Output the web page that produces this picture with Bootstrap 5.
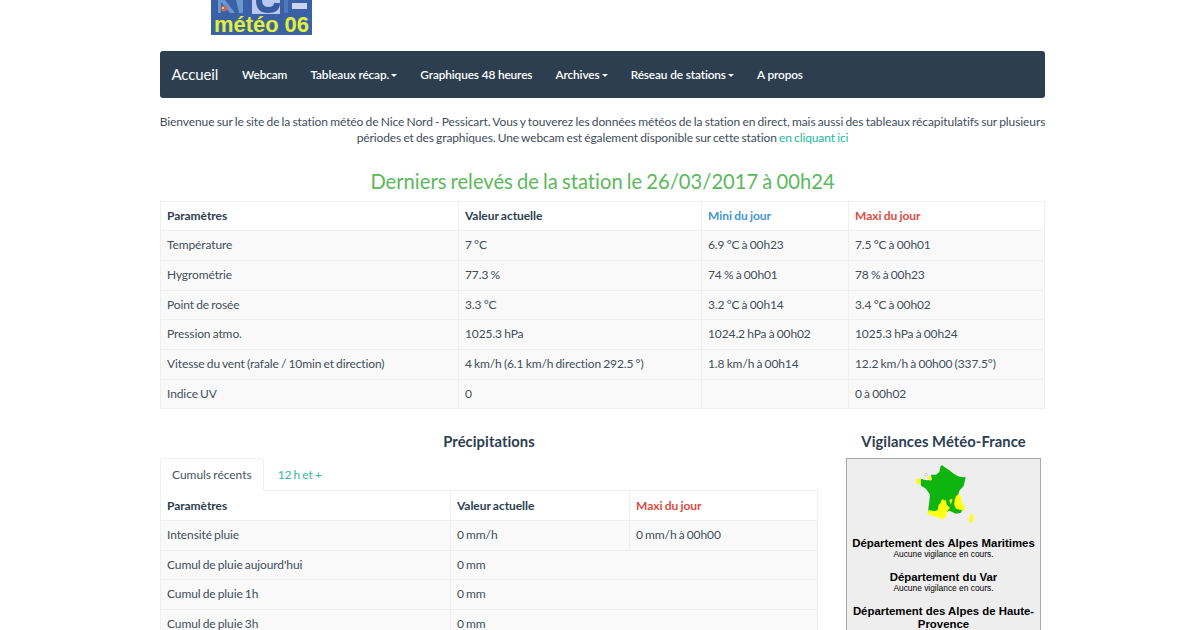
<!DOCTYPE html>
<html lang="fr">
<head>
<meta charset="utf-8">
<meta name="viewport" content="width=device-width, initial-scale=1">
<title>Nice Météo 06</title>
<link href="https://cdn.jsdelivr.net/npm/bootstrap@5.3.0/dist/css/bootstrap.min.css" rel="stylesheet">
<style>
body{font-family:Lato,"Liberation Sans",sans-serif;font-size:12px;letter-spacing:-.11px;word-spacing:-.75px;font-variant-ligatures:none;line-height:16.6px;color:#2c3e50}
a{color:#18bc9c;text-decoration:none}
.page{width:885px;height:630px;overflow:hidden;margin-left:160px}
.logo{display:block;width:101px;height:35px;margin-left:51px;letter-spacing:0;word-spacing:0}
.site-nav{height:47px;margin-top:16px;background:#2c3e50;border-radius:3px;padding:0 0 0 11.5px}
.site-nav .navbar-brand{font-size:15px;color:#fff;margin:0;padding:0;width:70.5px}
.site-nav .navbar-nav .nav-link{color:#fff;font-size:11.8px;font-weight:600;word-spacing:0;padding:1px 0 0;margin-right:23.2px;white-space:nowrap}
.site-nav .dropdown-toggle::after{border-top:3px solid;border-left:3px solid transparent;border-right:3px solid transparent;margin-left:2px;vertical-align:2px}
.intro{margin:16px -5px 0;line-height:16.2px;white-space:nowrap;color:#414e5b}
.intro-lead{letter-spacing:-.085px}
.title{font-size:20.2px;letter-spacing:0;word-spacing:-1.05px;line-height:22px;color:#5cb85c;margin:23.600px 0 8.700px;font-weight:400}
.sub{font-size:14.75px;letter-spacing:.08px;word-spacing:0;line-height:16px;font-weight:700;margin:0}
.data{table-layout:fixed;width:100%;margin:0;color:inherit;border-color:#ecf0f1;--bs-table-color:#2c3e50;--bs-table-border-color:#ecf0f1}
.data>:not(caption)>*>*{height:29.7px;padding:0 6px;vertical-align:middle;border-width:1px;color:inherit}
.data>tbody>tr>*{background:#f9f9f9;color:#414e5b}
.data>thead>tr>th{height:29.5px;letter-spacing:-.05px;word-spacing:-.6px}
.data>thead>tr>.mini{color:#3f97d3}
.data>thead>tr>.maxi{color:#dd4b40}
.lower{margin-top:24px;gap:28px}
.rain{width:658px}
.tabs{height:33px;margin-top:9px;border-bottom:1px solid #ecf0f1}
.tabs .nav-link{height:33px;padding:7.500px 11px;color:#35b899;border-color:transparent;border-radius:3px 3px 0 0;margin-right:2px}
.tabs .nav-link.active{color:#46545f;letter-spacing:-.03px;border-color:#ecf0f1 #ecf0f1 #fff}
.rain .data{margin-top:-1px}
.rain .data>thead>tr>th{padding-top:1px}
.alerts{width:195px}
.alert-box{margin-top:9px;height:220px;border:1px solid #a9a9a9;background:#eee;font-family:"Liberation Sans",sans-serif;letter-spacing:0;word-spacing:0;color:#000;padding:0 2px}
.alert-box svg{display:block;margin:0 auto;width:80px;height:78px}
.alert-box h3{font-size:11.4px;line-height:13px;font-weight:700;margin:0}
.alert-box p{font-size:8.4px;line-height:9px;margin:0 0 12px}
</style>
</head>
<body>
<div class="page">
<svg class="logo" viewBox="0 0 101 35" aria-label="Nice météo 06">
<rect width="101" height="35" fill="#3a61a6"/>
<rect x="41" width="28" height="14" fill="#b9c8ee"/>
<path d="M7 0h7l10 13h-5L10 2v11H7zM25 0h7v13h-4z" fill="#6a97cc"/>
<path d="M48 0q0 10 9 10t9-7" fill="none" stroke="#365a9e" stroke-width="6"/>
<path d="M81 3h15v6H81z" fill="#c9d4f2"/>
<path d="M73 0h4v13h-4z" fill="#5079ba"/>
<circle cx="13" cy="8.500" r="3" fill="#c9684c"/><circle cx="12" cy="8" r="1" fill="#f6dfa8"/>
<text x="50.500" y="31.500" text-anchor="middle" font-family="Liberation Sans, sans-serif" font-weight="700" font-size="21.5" textLength="95" lengthAdjust="spacingAndGlyphs" fill="#e3ef35">météo 06</text>
</svg>
<nav class="site-nav navbar navbar-expand d-flex justify-content-start">
<a class="navbar-brand" href="#">Accueil</a>
<ul class="navbar-nav">
<li><a class="nav-link" href="#">Webcam</a></li>
<li><a class="nav-link dropdown-toggle" href="#">Tableaux récap.</a></li>
<li><a class="nav-link" href="#">Graphiques 48 heures</a></li>
<li><a class="nav-link dropdown-toggle" href="#">Archives</a></li>
<li><a class="nav-link dropdown-toggle" href="#">Réseau de stations</a></li>
<li><a class="nav-link" href="#">A propos</a></li>
</ul>
</nav>
<p class="intro text-center"><span class="intro-lead">Bienvenue sur le site de la station météo de Nice Nord - Pessicart. Vous y touverez les données météos de la station en direct, mais aussi des tableaux récapitulatifs sur plusieurs</span><br>périodes et des graphiques. Une webcam est également disponible sur cette station <a href="#">en cliquant ici</a></p>
<h2 class="title text-center">Derniers relevés de la station le 26/03/2017 à 00h24</h2>
<table class="data table table-bordered">
<colgroup><col style="width:298px"><col style="width:243px"><col style="width:147px"><col></colgroup>
<thead><tr><th>Paramètres</th><th>Valeur actuelle</th><th class="mini">Mini du jour</th><th class="maxi">Maxi du jour</th></tr></thead>
<tbody>
<tr><td>Température</td><td>7 °C</td><td>6.9 °C à 00h23</td><td>7.5 °C à 00h01</td></tr>
<tr><td>Hygrométrie</td><td>77.3 %</td><td>74 % à 00h01</td><td>78 % à 00h23</td></tr>
<tr><td>Point de rosée</td><td>3.3 °C</td><td>3.2 °C à 00h14</td><td>3.4 °C à 00h02</td></tr>
<tr><td>Pression atmo.</td><td>1025.3 hPa</td><td>1024.2 hPa à 00h02</td><td>1025.3 hPa à 00h24</td></tr>
<tr><td>Vitesse du vent (rafale / 10min et direction)</td><td>4 km/h (6.1 km/h direction 292.5 °)</td><td>1.8 km/h à 00h14</td><td>12.2 km/h à 00h00 (337.5°)</td></tr>
<tr><td>Indice UV</td><td>0</td><td></td><td>0 à 00h02</td></tr>
</tbody>
</table>
<div class="lower d-flex">
<section class="rain">
<h3 class="sub text-center">Précipitations</h3>
<ul class="tabs nav nav-tabs">
<li class="nav-item"><a class="nav-link active" href="#">Cumuls récents</a></li>
<li class="nav-item"><a class="nav-link" href="#">12 h et +</a></li>
</ul>
<table class="data table table-bordered">
<colgroup><col style="width:290px"><col style="width:179px"><col></colgroup>
<thead><tr><th>Paramètres</th><th>Valeur actuelle</th><th class="maxi">Maxi du jour</th></tr></thead>
<tbody>
<tr><td>Intensité pluie</td><td>0 mm/h</td><td>0 mm/h à 00h00</td></tr>
<tr><td>Cumul de pluie aujourd'hui</td><td colspan="2">0 mm</td></tr>
<tr><td>Cumul de pluie 1h</td><td colspan="2">0 mm</td></tr>
<tr><td>Cumul de pluie 3h</td><td colspan="2">0 mm</td></tr>
</tbody>
</table>
</section>
<aside class="alerts text-center">
<h3 class="sub">Vigilances Météo-France</h3>
<div class="alert-box">
<svg viewBox="-6 3 240 234" role="img" aria-label="Carte de vigilance">
<path d="M108 21L118 29 130 37 145 49 160 56 179 58 173 84 160 98 155 118 165 135 172 150 165 164 150 167 130 158 110 168 66 162 70 130 72 110 60 92 45 83 42 62 62 67 78 66 75 50 90 50 100 42 103 26Z" fill="#0fb50f"/>
<path d="M30 64L45 62 44 79 32 77ZM64 53L75 57 75 68 66 64ZM63 167L68 156 85 160 95 156 98 140 103 136 108 124 120 128 122 140 132 149 122 162 120 178 108 184 90 176ZM150 115L158 107 165 118 168 135 178 150 172 158 150 152 145 140 146 125ZM130 126L140 122 134 140ZM198 165L203 180 199 196 189 189 190 176Z" fill="#ffff12"/>
<circle cx="60" cy="50" r="4" fill="none" stroke="#c7b9b9" stroke-width="2"/>
</svg>
<h3>Département des Alpes Maritimes</h3><p>Aucune vigilance en cours.</p>
<h3>Département du Var</h3><p>Aucune vigilance en cours.</p>
<h3>Département des Alpes de Haute-Provence</h3>
</div>
</aside>
</div>
</div>
<script src="https://cdn.jsdelivr.net/npm/bootstrap@5.3.0/dist/js/bootstrap.bundle.min.js"></script>
</body>
</html>
